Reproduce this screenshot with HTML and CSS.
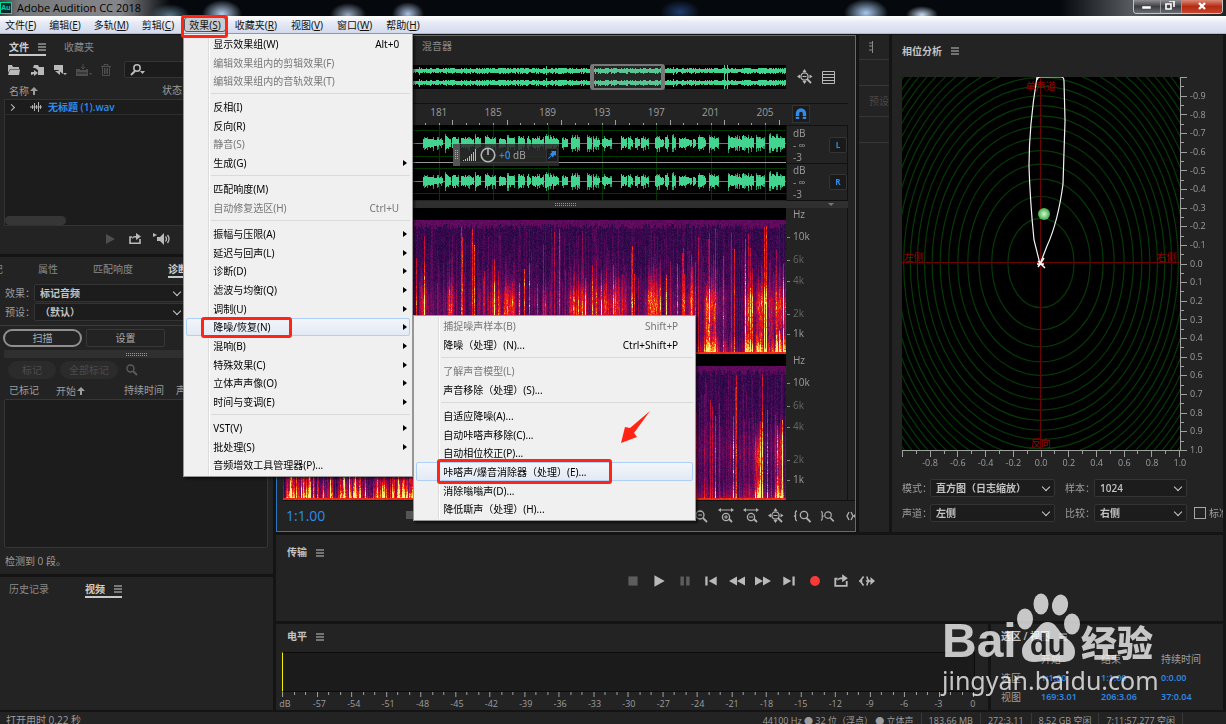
FILE: index.html
```html
<!DOCTYPE html>
<html lang="zh-CN">
<head>
<meta charset="utf-8">
<title>Adobe Audition CC 2018</title>
<link rel="stylesheet" href="styles.css">
</head>
<body>
<svg class="sprite" aria-hidden="true">
  <symbol id="i-lines" viewBox="0 0 8 8"><path d="M0 1.5h8M0 4.5h8M0 7.5h8" stroke="currentColor"/></symbol>
  <symbol id="i-up" viewBox="0 0 8 8"><path d="M4 0l4 4H5v4H3V4H0z" fill="currentColor"/></symbol>
  <symbol id="i-folder" viewBox="0 0 14 12"><path d="M1 1h4l1 2h6v2H3L1 9z" fill="currentColor"/><path d="M3 5.5h10L12 11H1z" fill="currentColor"/></symbol>
  <symbol id="i-import" viewBox="0 0 14 12"><path d="M4 1h4l1 2h5v8H8V6L5 4H3z" fill="currentColor"/><path d="M1 11V8h3V6l4 3-4 3v-2z" fill="currentColor"/></symbol>
  <symbol id="i-new" viewBox="0 0 14 12"><path d="M1 1h9v9L5 6H1z" fill="currentColor"/><path d="M2 7l5 4V7zM10 9h4l-2 2z" fill="currentColor"/></symbol>
  <symbol id="i-insert" viewBox="0 0 16 12"><path d="M0 5h4v1h6V5h2v7H0z" fill="currentColor"/><path d="M7 0v5M5 3l2 2 2-2" stroke="currentColor" fill="none"/><path d="M1 9h10" stroke="#232323"/><path d="M13 9h3l-1 2z" fill="currentColor"/></symbol>
  <symbol id="i-trash" viewBox="0 0 10 12"><path d="M0 2.5h10M3 2V.5h4V2M1.500 3v8.500h7V3M3.500 4v6M5 4v6M6.500 4v6" stroke="currentColor" fill="none"/></symbol>
  <symbol id="i-find" viewBox="0 0 16 12"><circle cx="7" cy="4" r="3.200" fill="none" stroke="currentColor" stroke-width="1.500"/><path d="M5 7L1 11" stroke="currentColor" stroke-width="2"/><path d="M10 7h5l-2.500 3z" fill="currentColor"/></symbol>
  <symbol id="i-search" viewBox="0 0 12 12"><circle cx="4.500" cy="4.500" r="3.500" fill="none" stroke="currentColor" stroke-width="1.400"/><path d="M7 7l4 4" stroke="currentColor" stroke-width="2"/></symbol>
  <symbol id="i-wave" viewBox="0 0 12 10"><path d="M0 5h12M2.500 3v4M4.500 1v8M6.500 3v4M8.500 0v10M10.500 3v4" stroke="currentColor"/></symbol>
  <symbol id="i-play" viewBox="0 0 14 12"><path d="M3 1l9 5-9 5z" fill="currentColor"/></symbol>
  <symbol id="i-stop" viewBox="0 0 14 12"><path d="M3 2h8v8H3z" fill="currentColor"/></symbol>
  <symbol id="i-pause" viewBox="0 0 14 12"><path d="M3 2h3v8H3zM8 2h3v8H8z" fill="currentColor"/></symbol>
  <symbol id="i-prev" viewBox="0 0 14 12"><path d="M2 2h2v8H2zM12 2v8L5 6z" fill="currentColor"/></symbol>
  <symbol id="i-next" viewBox="0 0 14 12"><path d="M12 2h-2v8h2zM2 2v8l7-4z" fill="currentColor"/></symbol>
  <symbol id="i-rew" viewBox="0 0 14 12"><path d="M7 2v8L0 6zM14 2v8L7 6z" fill="currentColor"/></symbol>
  <symbol id="i-fwd" viewBox="0 0 14 12"><path d="M0 2v8l7-4zM7 2v8l7-4z" fill="currentColor"/></symbol>
  <symbol id="i-rec" viewBox="0 0 14 12"><circle cx="7" cy="6" r="4.300" fill="#fa3a3a"/></symbol>
  <symbol id="i-loop" viewBox="0 0 14 12"><path d="M4 4H2v6.200h10V6" fill="none" stroke="currentColor" stroke-width="1.600"/><path d="M4 6c0-3 2-3 4-3V0l5 3.500L8 7V4.500c-2 0-3 0-4 1.500z" fill="currentColor"/></symbol>
  <symbol id="i-skip" viewBox="0 0 14 12"><path d="M4 2L1 6l3 4M7 2c0 3 1 3 2 4-1 1-2 1-2 4M0 6h3M6 6h7" fill="none" stroke="currentColor" stroke-width="1.400"/><path d="M10 2.500L14 6l-4 3.500z" fill="currentColor"/></symbol>
  <symbol id="i-speaker" viewBox="0 0 18 14"><path d="M0 1l4 2-4 2zM4 5h3l4-4v12L7 9H4z" fill="currentColor"/><path d="M12.500 4.500q2 2.500 0 5M14.500 3q3 4 0 8" fill="none" stroke="currentColor" stroke-width="1.300"/></symbol>
  <symbol id="i-zout" viewBox="0 0 14 14"><circle cx="6" cy="6" r="4" fill="none" stroke="currentColor" stroke-width="1.300"/><path d="M4 6h4" stroke="currentColor"/><path d="M9 9l4 4" stroke="currentColor" stroke-width="1.800"/></symbol>
  <symbol id="i-hzin" viewBox="0 0 16 16"><path d="M2 2h12" stroke="currentColor"/><path d="M0 2l3-2v4zM16 2l-3-2v4z" fill="currentColor"/><circle cx="8" cy="9" r="3.600" fill="none" stroke="currentColor" stroke-width="1.300"/><path d="M6 9h4M8 7v4" stroke="currentColor"/><path d="M11 11l3 3" stroke="currentColor" stroke-width="1.800"/></symbol>
  <symbol id="i-hzout" viewBox="0 0 16 16"><path d="M2 2h12" stroke="currentColor"/><path d="M0 2l3-2v4zM16 2l-3-2v4z" fill="currentColor"/><circle cx="8" cy="9" r="3.600" fill="none" stroke="currentColor" stroke-width="1.300"/><path d="M6 9h4" stroke="currentColor"/><path d="M11 11l3 3" stroke="currentColor" stroke-width="1.800"/></symbol>
  <symbol id="i-zfull" viewBox="0 0 16 16"><circle cx="7.500" cy="7.500" r="3.600" fill="none" stroke="currentColor" stroke-width="1.300"/><path d="M5.500 7.500h4" stroke="currentColor"/><path d="M10 10l4 4" stroke="currentColor" stroke-width="1.800"/><path d="M5.500 3l2-3 2 3zM5.500 12l2 3 2-3zM3 5.500l-3 2 3 2zM12.500 5.500l3 2-3 2z" fill="currentColor"/></symbol>
  <symbol id="i-zl" viewBox="0 0 18 14"><path d="M4 2Q2 2 2.500 5T1 7q2 0 1.500 2T4 12" fill="none" stroke="currentColor" stroke-width="1.300"/><circle cx="11" cy="6" r="3.700" fill="none" stroke="currentColor" stroke-width="1.300"/><path d="M13.500 9l4 4" stroke="currentColor" stroke-width="1.800"/></symbol>
  <symbol id="i-zr" viewBox="0 0 18 14"><path d="M1 2q2 0 1.500 3T4 7q-2 0-1.500 2T1 12" fill="none" stroke="currentColor" stroke-width="1.300"/><circle cx="9" cy="6" r="3.700" fill="none" stroke="currentColor" stroke-width="1.300"/><path d="M11.500 9l4 4" stroke="currentColor" stroke-width="1.800"/></symbol>
  <symbol id="i-list" viewBox="0 0 13 13"><path d="M.5.5h12v12H.5zM0 3.500h13M0 6.500h13M0 9.500h13" fill="none" stroke="currentColor"/></symbol>
  <symbol id="i-magnet" viewBox="0 0 12 12"><path d="M2.500 11V5.500a3.500 3.500 0 017 0V11" fill="none" stroke="#2d8ceb" stroke-width="3.400"/><path d="M0 8.500h5M7 8.500h5" stroke="#1b1b1b" stroke-width=".8"/></symbol>
  <symbol id="i-pin" viewBox="0 0 10 10"><path d="M4 0h6v6L8 5 6 8 4.500 6 1 10 0 9l4-4-2-1 3-2z" fill="#2d8ceb"/></symbol>
  <symbol id="i-knob" viewBox="0 0 16 16"><circle cx="8" cy="8" r="6.800" fill="none" stroke="#b5b5b5" stroke-width="1.600"/><path d="M8 1v7" stroke="#b5b5b5" stroke-width="1.600"/></symbol>
  <symbol id="i-bars" viewBox="0 0 14 12"><path d="M.5 12v-1M2.500 12v-2M4.500 12V9M6.500 12V7M8.500 12V5M10.500 12V3M12.500 12V0" stroke="#bbb"/></symbol>
</svg>

<div class="app">
  <header class="titlebar">
    <span class="logo">Au</span>
    <h1 class="app-title">Adobe Audition CC 2018</h1>
    <div class="win-controls">
      <button class="win-btn" aria-label="最小化"><svg width="26" height="12"><path d="M8 5h9v3H8z" fill="#fff" stroke="#444" stroke-width=".5"/></svg></button>
      <button class="win-btn" aria-label="还原"><svg width="20" height="12"><path d="M8 0h5v6M5 3h5v5H5z" fill="none" stroke="#fff" stroke-width="1.600"/></svg></button>
      <button class="win-btn win-close" aria-label="关闭"><svg width="40" height="12"><path d="M17 2l6 6M23 2l-6 6" stroke="#fff" stroke-width="2.400"/></svg></button>
    </div>
  </header>

  <nav class="menubar">
    <button class="menu-btn">文件(<u>F</u>)</button>
    <button class="menu-btn">编辑(<u>E</u>)</button>
    <button class="menu-btn">多轨(<u>M</u>)</button>
    <button class="menu-btn">剪辑(<u>C</u>)</button>
    <div class="menu-holder">
      <button class="menu-btn is-open">效果(<u>S</u>)</button>
      <div class="menu menu-main">
        <div class="group">
          <button class="item">显示效果组(W)<kbd>Alt+0</kbd></button>
          <button class="item" disabled>编辑效果组内的剪辑效果(F)</button>
          <button class="item" disabled>编辑效果组内的音轨效果(T)</button>
        </div>
        <div class="group">
          <button class="item">反相(I)</button>
          <button class="item">反向(R)</button>
          <button class="item" disabled>静音(S)</button>
          <button class="item has-sub">生成(G)</button>
        </div>
        <div class="group">
          <button class="item">匹配响度(M)</button>
          <button class="item" disabled>自动修复选区(H)<kbd>Ctrl+U</kbd></button>
        </div>
        <div class="group">
          <button class="item has-sub">振幅与压限(A)</button>
          <button class="item has-sub">延迟与回声(L)</button>
          <button class="item has-sub">诊断(D)</button>
          <button class="item has-sub">滤波与均衡(Q)</button>
          <button class="item has-sub">调制(U)</button>
          <button class="item has-sub is-hot mark-restore">降噪/恢复(N)</button>
          <button class="item has-sub">混响(B)</button>
          <button class="item has-sub">特殊效果(C)</button>
          <button class="item has-sub">立体声声像(O)</button>
          <button class="item has-sub">时间与变调(E)</button>
        </div>
        <div class="group">
          <button class="item has-sub">VST(V)</button>
          <button class="item has-sub">批处理(S)</button>
          <button class="item">音频增效工具管理器(P)...</button>
        </div>
        <div class="menu menu-sub">
          <div class="group">
            <button class="item" disabled>捕捉噪声样本(B)<kbd>Shift+P</kbd></button>
            <button class="item">降噪（处理）(N)...<kbd>Ctrl+Shift+P</kbd></button>
          </div>
          <div class="group">
            <button class="item" disabled>了解声音模型(L)</button>
            <button class="item">声音移除（处理）(S)...</button>
          </div>
          <div class="group">
            <button class="item">自适应降噪(A)...</button>
            <button class="item">自动咔嗒声移除(C)...</button>
            <button class="item">自动相位校正(P)...</button>
            <button class="item is-hot mark-click">咔嗒声/爆音消除器（处理）(E)...</button>
            <button class="item">消除嗡嗡声(D)...</button>
            <button class="item">降低嘶声（处理）(H)...</button>
          </div>
          <svg class="arrow" viewBox="0 0 30 33"><path d="M29 0L9 17 4 16 0 32 16 26 13 22z" fill="#ff2414"/></svg>
        </div>
      </div>
    </div>
    <button class="menu-btn">收藏夹(<u>R</u>)</button>
    <button class="menu-btn">视图(<u>V</u>)</button>
    <button class="menu-btn">窗口(<u>W</u>)</button>
    <button class="menu-btn">帮助(<u>H</u>)</button>
  </nav>

  <main class="workspace">
    <div class="left">
      <section class="panel files">
        <div class="tabs">
          <button class="tab is-active">文件<svg class="ham"><use href="#i-lines"/></svg></button>
          <button class="tab">收藏夹</button>
        </div>
        <div class="filebar">
          <button class="ico" aria-label="打开"><svg width="14" height="12"><use href="#i-folder"/></svg></button>
          <button class="ico" aria-label="导入"><svg width="14" height="12"><use href="#i-import"/></svg></button>
          <button class="ico" aria-label="新建"><svg width="14" height="12"><use href="#i-new"/></svg></button>
          <button class="ico dim" aria-label="插入"><svg width="16" height="12"><use href="#i-insert"/></svg></button>
          <button class="ico dim" aria-label="删除"><svg width="10" height="12"><use href="#i-trash"/></svg></button>
          <label class="search"><svg width="16" height="12"><use href="#i-find"/></svg><input type="text" aria-label="搜索文件"></label>
        </div>
        <div class="file-head"><span class="sort">名称<svg width="8" height="8"><use href="#i-up"/></svg></span><span>状态</span></div>
        <div class="file-list">
          <div class="file-row"><i class="chev"></i><svg width="12" height="10"><use href="#i-wave"/></svg><b>无标题 (1).wav</b></div>
          <div class="scroll-pill"></div>
        </div>
        <div class="preview">
          <button class="ico dim" aria-label="播放"><svg width="14" height="12"><use href="#i-play"/></svg></button>
          <button class="ico" aria-label="循环"><svg width="14" height="12"><use href="#i-loop"/></svg></button>
          <button class="ico" aria-label="自动播放"><svg width="18" height="14"><use href="#i-speaker"/></svg></button>
        </div>
      </section>

      <section class="panel diag">
        <div class="tabs diag-tabs">
          <button class="tab">记</button>
          <button class="tab">属性</button>
          <button class="tab">匹配响度</button>
          <button class="tab is-active">诊断</button>
        </div>
        <div class="field"><label for="fx">效果：</label><span class="select"><select id="fx"><option>标记音频</option></select></span></div>
        <div class="field"><label for="preset">预设：</label><span class="select"><select id="preset"><option>（默认）</option></select></span></div>
        <div class="scan">
          <button class="btn btn-round">扫描</button>
          <button class="btn">设置</button>
        </div>
        <div class="marks">
          <div class="grip"><i class="grip-dots"></i></div>
          <div class="mark-tools">
            <button class="pill" disabled>标记</button>
            <button class="pill" disabled>全部标记</button>
            <svg width="12" height="12"><use href="#i-search"/></svg>
          </div>
          <div class="mark-head"><span>已标记</span><span class="sort">开始<svg width="8" height="8"><use href="#i-up"/></svg></span><span>持续时间</span><span>声道</span></div>
          <div class="mark-list"></div>
        </div>
        <p class="found">检测到 0 段。</p>
      </section>

      <section class="panel history">
        <div class="tabs">
          <button class="tab">历史记录</button>
          <button class="tab is-active">视频<svg class="ham"><use href="#i-lines"/></svg></button>
        </div>
      </section>
    </div>

    <section class="panel editor">
      <div class="tabs editor-tabs"><button class="tab">混音器</button></div>
      <div class="ed-row overview">
        <div class="track"><canvas id="overview" width="503" height="24"></canvas><div class="range"></div></div>
        <div class="side side-icons"><svg width="16" height="16"><use href="#i-zfull"/></svg><svg width="13" height="13"><use href="#i-list"/></svg></div>
      </div>
      <div class="ed-row ruler">
        <div class="track">
          <div class="scale"><span>173</span><span>177</span><span>181</span><span>185</span><span>189</span><span>193</span><span>197</span><span>201</span><span>205</span></div>
          <canvas id="ticks" width="503" height="7"></canvas>
        </div>
        <div class="side"><button class="magnet" aria-label="吸附"><svg width="12" height="12"><use href="#i-magnet"/></svg></button></div>
      </div>
      <div class="ed-row">
        <div class="track">
          <canvas id="wave" width="503" height="75"></canvas>
          <div class="hud"><i class="hud-grip"></i><svg width="14" height="12"><use href="#i-bars"/></svg><svg width="16" height="16"><use href="#i-knob"/></svg><span><b>+0</b> dB</span><button class="pin" aria-label="固定"><svg width="8" height="8"><use href="#i-pin"/></svg></button></div>
        </div>
        <div class="side channels">
          <div class="chan"><div class="db"><span>dB</span><span>- ∞</span><span>-3</span></div><button class="lr">L</button></div>
          <div class="chan"><div class="db"><span>dB</span><span>- ∞</span><span>-3</span></div><button class="lr">R</button></div>
        </div>
      </div>
      <div class="splitter"><i class="grip-dots"></i><i class="caret"></i></div>
      <div class="ed-row">
        <canvas class="track" id="spec1" width="503" height="146"></canvas>
        <div class="side hz"><span>Hz</span><span>10k</span><span class="lo">6k</span><span class="lo">4k</span><span class="lo">2k</span><span>1k</span></div>
      </div>
      <div class="ed-row">
        <canvas class="track" id="spec2" width="503" height="146"></canvas>
        <div class="side hz"><span>Hz</span><span>10k</span><span class="lo">6k</span><span class="lo">4k</span><span class="lo">2k</span><span>1k</span></div>
      </div>
      <div class="ed-foot">
        <span class="time">1:1.00</span>
        <i class="foot-stop"></i>
        <div class="zooms">
          <svg width="16" height="14"><use href="#i-zout"/></svg><svg width="16" height="16"><use href="#i-hzin"/></svg><svg width="16" height="16"><use href="#i-hzout"/></svg><svg width="16" height="16"><use href="#i-zfull"/></svg><svg width="18" height="14"><use href="#i-zl"/></svg><svg width="16" height="14"><use href="#i-zr"/></svg><svg width="10" height="14"><path d="M4 3L2 7l2 4M6 3l2 4-2 4M12 4L9 7l3 3" stroke="currentColor" fill="none" stroke-width="1.300"/></svg>
        </div>
      </div>
    </section>

    <section class="panel strip">
      <div class="strip-top"><svg width="6" height="12"><path d="M1 2h3M1 5h3M1 9h3M4.500 0v12" stroke="#888"/></svg></div>
      <div class="strip-row"></div>
      <div class="strip-row strip-preset">预设</div>
      <div class="strip-row"></div>
    </section>

    <section class="panel phase">
      <div class="tabs"><button class="tab is-title">相位分析<svg class="ham"><use href="#i-lines"/></svg></button></div>
      <div class="plot-grid">
        <div class="plot">
          <svg id="rings" viewBox="0 0 278 373" preserveAspectRatio="none">
            <path d="M138.500 0v373" stroke="#6b0303" stroke-width="1"/><path d="M0 185.500h278" stroke="#6b0303" stroke-width="1"/>
            <path d="M135 3Q136 0 138 0h21q3 0 3 4l1 40-2 63q-5 38-16 62l-7 18-6-24q-4-40-5-74 0-40 8-89z" fill="none" stroke="#f4f4f4" stroke-width="1.200"/>
            <path d="M136 184l7 7M142 181l-6 9M135 187h7" stroke="#fff" stroke-width="1.500"/>
            <defs><radialGradient id="ball"><stop offset="0" stop-color="#d9f5d6"/><stop offset="1" stop-color="#3cb043"/></radialGradient></defs>
            <circle cx="142" cy="137" r="6" fill="url(#ball)"/>
          </svg>
          <span class="pl pl-top">单声道</span><span class="pl pl-left">左侧</span><span class="pl pl-right">右侧</span><span class="pl pl-bottom">反向</span>
        </div>
        <div class="axis-y"><canvas id="axisY" width="8" height="374"></canvas><div class="vscale"><span>-0.9</span><span>-0.8</span><span>-0.7</span><span>-0.6</span><span>-0.5</span><span>-0.4</span><span>-0.3</span><span>-0.2</span><span>-0.1</span><span>0.0</span><span>0.1</span><span>0.2</span><span>0.3</span><span>0.4</span><span>0.5</span><span>0.6</span><span>0.7</span><span>0.8</span><span>0.9</span><span>1.0</span></div></div>
        <div class="axis-x"><canvas id="axisX" width="278" height="7"></canvas><div class="scale"><span>-0.8</span><span>-0.6</span><span>-0.4</span><span>-0.2</span><span>0.0</span><span>0.2</span><span>0.4</span><span>0.6</span><span>0.8</span><span>1.0</span></div></div>
      </div>
      <div class="phase-form">
        <label for="mode">模式：</label><span class="select"><select id="mode"><option>直方图（日志缩放）</option></select></span>
        <label for="samples">样本：</label><span class="select"><select id="samples"><option>1024</option></select></span><span></span>
        <label for="chan">声道：</label><span class="select"><select id="chan"><option>左侧</option></select></span>
        <label for="cmp">比较：</label><span class="select"><select id="cmp"><option>右侧</option></select></span>
        <label class="norm"><input type="checkbox">标准化</label>
      </div>
    </section>

    <section class="panel transport">
      <h2 class="ptitle">传输<svg class="ham"><use href="#i-lines"/></svg></h2>
      <div class="controls">
        <button class="ico off" aria-label="停止"><svg width="16" height="14"><use href="#i-stop"/></svg></button>
        <button class="ico" aria-label="播放"><svg width="16" height="14"><use href="#i-play"/></svg></button>
        <button class="ico off" aria-label="暂停"><svg width="16" height="14"><use href="#i-pause"/></svg></button>
        <button class="ico" aria-label="移到上一个"><svg width="16" height="14"><use href="#i-prev"/></svg></button>
        <button class="ico" aria-label="快退"><svg width="16" height="14"><use href="#i-rew"/></svg></button>
        <button class="ico" aria-label="快进"><svg width="16" height="14"><use href="#i-fwd"/></svg></button>
        <button class="ico" aria-label="移到下一个"><svg width="16" height="14"><use href="#i-next"/></svg></button>
        <button class="ico" aria-label="录制"><svg width="16" height="14"><use href="#i-rec"/></svg></button>
        <button class="ico" aria-label="循环播放"><svg width="16" height="14"><use href="#i-loop"/></svg></button>
        <button class="ico" aria-label="跳过所选项目"><svg width="16" height="14"><use href="#i-skip"/></svg></button>
      </div>
    </section>

    <section class="panel levels">
      <h2 class="ptitle">电平<svg class="ham"><use href="#i-lines"/></svg></h2>
      <div class="meter"><div class="bar"></div><div class="bar"></div></div>
      <canvas id="dbTicks" width="692" height="5"></canvas>
      <div class="scale db-scale"><span>dB</span><span>-57</span><span>-54</span><span>-51</span><span>-48</span><span>-45</span><span>-42</span><span>-39</span><span>-36</span><span>-33</span><span>-30</span><span>-27</span><span>-24</span><span>-21</span><span>-18</span><span>-15</span><span>-12</span><span>-9</span><span>-6</span><span>-3</span><span>0</span></div>
    </section>

    <section class="panel selview">
      <h2 class="ptitle">选区 / 视图<svg class="ham"><use href="#i-lines"/></svg></h2>
      <table class="seltable">
        <tr><th></th><th>开始</th><th>结束</th><th>持续时间</th></tr>
        <tr><th>选区</th><td>1:1.00</td><td>1:1.00</td><td>0:0.00</td></tr>
        <tr><th>视图</th><td>169:3.01</td><td>206:3.06</td><td>37:0.04</td></tr>
      </table>
    </section>
  </main>

  <footer class="status">
    <span class="opened">打开用时 0.22 秒</span>
    <span class="cell">44100 Hz ● 32 位（浮点） ● 立体声</span><span class="cell">183.66 MB</span><span class="cell">272:3.11</span><span class="cell">8.52 GB 空闲</span><span class="cell">7:11:57.277 空闲</span>
  </footer>

  <div class="watermark" aria-hidden="true">
    <div class="wm-top">
      <span class="wm-bai">Bai</span>
      <span class="wm-paw"><svg viewBox="0 0 64 70"><g fill="#fff"><ellipse cx="8" cy="26" rx="8" ry="10.500"/><ellipse cx="24" cy="11" rx="7.500" ry="10.500"/><ellipse cx="43" cy="12" rx="8" ry="10.500" transform="rotate(12 43 12)"/><ellipse cx="55" cy="31" rx="8" ry="10.500"/><path d="M31 29c8 0 10 9 16 14 8 6 11 10 11 16 0 8-6 10-13 10-6 0-10-1-15-1s-8 1-13 1C9 69 5 65 5 58c0-7 5-10 10-16 5-5 8-13 16-13z"/></g></svg><em>du</em></span>
      <span class="wm-cn">经验</span>
    </div>
    <div class="wm-url">jingyan.baidu.com</div>
  </div>
</div>
<script src="draw.js"></script>
</body>
</html>
```
FILE: styles.css
```css
* { box-sizing: border-box; }
body {
  margin: 0;
  background: #141414;
  color: #9d9d9d;
  font: 10px/14px "Open Sans", "Noto Sans CJK SC", sans-serif;
}
button, input, select { font: inherit; color: inherit; }
button { margin: 0; padding: 0; border: 0; background: none; white-space: nowrap; }
label { white-space: nowrap; }
svg, canvas { display: block; flex: none; }
h1, h2, p { margin: 0; font-size: inherit; }
.sprite { position: absolute; width: 0; height: 0; }
.app { display: flex; flex-direction: column; height: 100vh; overflow: hidden; position: relative; }

/* title bar */
.titlebar {
  display: flex; align-items: center; height: 16px; flex: none;
  background:
    radial-gradient(ellipse 20px 14px at 222px 14px, #b5cdec, transparent),
    radial-gradient(ellipse 20px 12px at 170px 16px, #5a7c8c, transparent),
    radial-gradient(ellipse 18px 12px at 348px 15px, #98a9c0, transparent),
    radial-gradient(ellipse 16px 12px at 408px 14px, #abc2e4, transparent),
    radial-gradient(ellipse 20px 12px at 680px 12px, #1e3c6c, transparent),
    radial-gradient(ellipse 22px 14px at 866px 13px, #a9c9ee, transparent),
    radial-gradient(ellipse 16px 9px at 922px 15px, #c5daf2, transparent),
    linear-gradient(90deg, #3c4247, #76797b 20px, #85868a 120px, #05080c 170px, #05080c 1060px, #555a5e 1130px, #222 100%);
  color: #000;
}
.logo { width: 12px; height: 12px; margin-right: 5px; background: #002b26; border: 1px solid #0d9; color: #1dcaae; font: bold 7px/10px "Open Sans", sans-serif; text-align: center; }
.app-title { font: 11px/14px "Open Sans", sans-serif; }
.win-controls { display: flex; align-self: flex-start; margin: 0 3px 0 auto; border: 1px solid #c5c5c5; border-top: 0; border-radius: 0 0 4px 4px; overflow: hidden; }
.win-btn { height: 13px; background: linear-gradient(#8d8f93, #3b3d42 50%, #6b6d75); border-right: 1px solid #999; }
.win-close { background: linear-gradient(#d98a78, #b52a12 50%, #c8452c); border: 0; }

/* menu bar */
.menubar { display: flex; align-items: center; height: 18px; flex: none; background: linear-gradient(#fff, #e6eaf5 40%, #d3daed); border-bottom: 1px solid #b4b8c6; color: #111; position: relative; z-index: 5; font-family: "Noto Sans", "Noto Sans CJK SC", sans-serif; }
.menu-btn { height: 16px; padding: 0 7px 0 6px; }
.menu-btn:first-child { padding-left: 5px; }
.menu-holder { position: relative; margin-left: 2px; }
.menu-holder ~ .menu-btn { padding: 0 7px; }
.menu-btn.is-open { background: #c9cbd2; border: 1px solid #555; border-radius: 3px; padding: 0 4px; height: 15px; margin: 0 2px 0 1px; }
.menu-holder::after, .mark-restore::before, .mark-click::before { content: ""; position: absolute; border: 3px solid #ff2414; border-radius: 3px; pointer-events: none; z-index: 3; }
.menu-holder::after { inset: -2px 0 -6px -2px; }
.menu { position: absolute; background: #f0f0f0; border: 1px solid #979797; box-shadow: 2px 2px 2px rgba(0, 0, 0, .55); color: #000; padding: 0 2px 2px; }
.menu::before { content: ""; position: absolute; top: 1px; bottom: 1px; left: 24px; width: 2px; background: linear-gradient(90deg, #dcdcdc 50%, #fff 50%); }
.menu-main { top: 16px; left: 0; width: 230px; }
.menu-sub { top: 281px; left: 229px; width: 283px; }
.group + .group { border-top: 1px solid #dadada; margin: 3px 0 0 25px; padding-top: 3px; }
.item { position: relative; display: flex; align-items: center; width: 100%; height: 19px; padding: 0 10px 0 26px; border: 1px solid transparent; border-radius: 2px; text-align: left; }
.group + .group .item { margin-left: -25px; width: calc(100% + 25px); }
.item:nth-child(3n) { height: 18px; }
.item:disabled { color: #777; }
.item kbd { margin-left: auto; font: inherit; }
.menu-sub .item { padding-right: 14px; }
.item.has-sub::after { content: ""; margin: 0 -8px 0 auto; border: 3px solid transparent; border-left: 4px solid #000; border-right: 0; }
.item.is-hot { background: linear-gradient(#f3f5f9, #e3eaf5); border-color: #aecff7; }
.mark-restore::before { inset: -2px 117px -3px 14px; }
.mark-click::before { inset: -4px 80px -4px 20px; }
.arrow { position: absolute; width: 30px; height: 33px; left: 207px; top: 95px; }

/* workspace */
.workspace { flex: 1; min-height: 0; display: grid; grid-template-columns: 273px minmax(0, 1fr) 30px 96px 232px; grid-template-rows: minmax(0, 1fr) 86px 86px; gap: 3px; padding: 1px 3px 2px 0; }
.panel { background: #232323; overflow: hidden; }
.left { grid-row: 1 / 4; display: grid; grid-template-rows: 219px minmax(0, 1fr) 133px; gap: 3px; }
.tabs { display: flex; align-items: flex-start; gap: 18px; padding: 4px 9px 0; height: 26px; }
.tab { display: flex; align-items: center; gap: 9px; height: 17px; border-bottom: 2px solid transparent; color: #8a8a8a; }
.tab.is-active { color: #cfcfcf; border-color: #c8c8c8; font-weight: 600; }
.tab.is-title { color: #c4c4c4; font-weight: 600; }
.ham { width: 8px; height: 9px; }
.ico { color: #b9b9b9; }
.ico.dim { color: #4e4e4e; }
.ico.off { color: #5d5d5d; }
.sort { display: flex; align-items: center; gap: 1px; }

.filebar { display: flex; align-items: center; gap: 9px; padding-left: 7px; height: 17px; }
.search { display: flex; align-items: center; flex: 1; height: 17px; background: #1b1b1b; border: 1px solid #343434; border-radius: 2px; margin: 0 4px 0 4px; padding-left: 5px; color: #bbb; }
.search input { flex: 1; min-width: 0; border: 0; background: none; height: 14px; padding: 0; }
.file-head { display: flex; gap: 124px; padding: 5px 9px 0; height: 21px; }
.file-list { position: relative; margin: 0 4px; height: 127px; border: 1px solid #333; background: #1c1c1c; display: flex; flex-direction: column; }
.file-row { display: flex; align-items: center; gap: 6px; height: 15px; padding-left: 4px; border-bottom: 1px solid #2c2c2c; color: #b0b0b0; }
.file-row b { color: #2d8ceb; font-weight: 600; }
.file-row svg { margin-left: 10px; }
.chev { width: 5px; height: 5px; border: solid #bbb; border-width: 1px 1px 0 0; transform: rotate(45deg); }
.scroll-pill { margin-top: auto; width: 61px; height: 9px; border-radius: 5px; background: #363636; }
.preview { display: flex; align-items: center; gap: 11px; height: 26px; padding-left: 103px; }

.diag { display: flex; flex-direction: column; }
.diag-tabs { gap: 35px; padding: 4px 0 0; margin-left: -7px; flex: none; }
.field { display: grid; grid-template-columns: 29px 152px; align-items: center; padding-left: 5px; height: 19px; }
.select { position: relative; display: block; }
.select select { appearance: none; width: 100%; height: 18px; padding: 0 16px 0 5px; border: 1px solid #343434; border-radius: 2px; background: #1c1c1c; color: #c3c3c3; font-weight: 600; display: block; }
.select::after { content: ""; position: absolute; right: 6px; top: 5px; width: 5px; height: 5px; border: solid #ccc; border-width: 0 1px 1px 0; transform: rotate(45deg); }
.scan { display: flex; gap: 4px; padding: 3px 3px; margin-top: 4px; border-top: 1px solid #3a3a3a; }
.btn { width: 79px; height: 18px; border: 1px solid #383838; border-radius: 2px; color: #aaa; }
.btn-round { border: 2px solid #8f8f8f; border-radius: 9px; }
.marks { flex: 1; min-height: 0; margin: 0 5px 0 4px; display: flex; flex-direction: column; }
.grip, .splitter { background: #2f2f2f; height: 8px; display: flex; align-items: center; justify-content: center; flex: none; }
.grip-dots { width: 21px; height: 3px; background: repeating-linear-gradient(transparent 0 1px, #2f2f2f 1px 2px), repeating-linear-gradient(90deg, #999 0 1px, #2f2f2f 1px 2px); }
.mark-tools { display: flex; gap: 4px; align-items: center; padding: 3px 4px; height: 24px; flex: none; color: #5c5c5c; }
.mark-tools svg { margin-left: 4px; }
.pill { height: 18px; padding: 0 14px; border-radius: 9px; background: #2b2b2b; color: #4c4c4c; }
.pill + .pill { padding: 0 9px; }
.mark-head { display: flex; gap: 17px; padding: 1px 5px 0; height: 17px; flex: none; }
.mark-head span:nth-child(3) { margin-left: 22px; }
.mark-head span:nth-child(4) { margin-left: -5px; }
.mark-list { flex: 1; background: #1c1c1c; border: 1px solid #363636; border-radius: 2px; }
.found { padding: 6px 5px 6px; }
.history .tabs { gap: 36px; padding: 4px 9px 0; }

/* editor */
.editor { border: 1px solid #2b77c4; display: flex; flex-direction: column; padding: 0 7px 0 6px; }
.editor-tabs { padding: 2px 0 0 139px; height: 29px; }
.ed-row { display: flex; flex: none; }
.track { flex: 1; min-width: 0; position: relative; }
.track canvas { width: 100%; }
.side { width: 62px; flex: none; position: relative; }
.side-icons { display: flex; align-items: center; gap: 9px; padding-left: 11px; color: #b9b9b9; }
.overview { margin-bottom: 14px; }
.range { position: absolute; left: 61%; width: 15%; top: -1px; bottom: -1px; border: 2px solid #777; border-left-width: 4px; border-right-width: 4px; border-radius: 3px; background: rgba(150, 150, 150, .25); }
.ruler { border-top: 1px solid #111; height: 22px; }
.scale { display: flex; justify-content: space-between; }
.scale span { width: 0; display: flex; justify-content: center; white-space: nowrap; }
.ruler .scale { padding: 1px 21px 0 47px; }
.magnet { margin: 1px 0 0 6px; width: 18px; height: 18px; border: 1px solid #333; background: #1b1b1b; display: flex; align-items: center; justify-content: center; }
.hud { position: absolute; left: 170px; top: 19px; height: 22px; width: 106px; display: flex; align-items: center; gap: 3px; background: rgba(45, 45, 45, .85); color: #aaa; }
.hud b { color: #2d8ceb; font-weight: 600; }
.hud-grip { width: 7px; height: 22px; background: linear-gradient(90deg, #555 2px, transparent 2px 3px, #555 3px 4px, transparent 4px 5px, #555 5px), repeating-linear-gradient(#aaa 0 1px, #555 1px 2px) 0 6px / 100% 9px no-repeat, #555; }
.pin { margin-left: auto; margin-right: 1px; width: 12px; height: 14px; border: 1px solid #333; background: #1b1b1b; display: flex; align-items: center; justify-content: center; }
.channels { border: 1px solid #111; }
.chan { display: flex; align-items: center; height: 37px; padding: 0 0 0 6px; }
.chan + .chan { border-top: 1px solid #111; }
.db { flex: 1; line-height: 12px; }
.db span { display: block; }
.lr { width: 18px; height: 16px; border: 1px solid #343434; border-radius: 2px; background: #1a1a1a; color: #2d8ceb; font-weight: bold; font-size: 8px; }
.splitter { height: 7px; position: relative; }
.caret { position: absolute; right: 14px; border: 3px solid transparent; border-top-color: #777; border-bottom: 0; }
.hz { padding-left: 7px; border-right: 1px solid #111; display: flex; flex-direction: column; }
.hz span { position: relative; line-height: 13px; }
.hz span:nth-child(2) { margin-top: 9px; }
.hz span:nth-child(3) { margin-top: 10px; }
.hz span:nth-child(4) { margin-top: 8px; }
.hz span:nth-child(5) { margin-top: 20px; }
.hz span:nth-child(6) { margin-top: 7px; }
.hz span + span::before { content: ""; position: absolute; left: -6px; top: 7px; width: 3px; height: 1px; background: #888; }
.hz .lo { color: #666; }
.ed-foot { flex: 1; display: flex; align-items: center; border-top: 1px solid #111; margin-right: -7px; }
.time { font-size: 14px; color: #2d8ceb; padding-left: 3px; }
.foot-stop { width: 8px; height: 8px; background: #555; margin-left: 81px; margin-bottom: 2px; }
.zooms { margin-left: auto; display: flex; align-items: center; gap: 9px; color: #b0b0b0; }

.strip-top { height: 25px; padding: 6px 0 0 9px; border-bottom: 1px solid #363636; }
.strip-row { height: 26px; border-bottom: 1px solid #363636; }
.strip-preset { height: 31px; padding: 8px 0 0 10px; color: #484848; white-space: nowrap; overflow: hidden; }

/* phase analysis */
.phase { grid-column: 4 / 6; padding-left: 10px; display: flex; flex-direction: column; }
.phase .tabs { padding: 8px 0 0; height: 42px; flex: none; }
.plot-grid { display: grid; grid-template-columns: 278px 1fr; grid-template-rows: 373px 29px; font-size: 9px; line-height: 12px; }
.plot { position: relative; background: #000; }
.plot svg { width: 100%; height: 100%; overflow: hidden; }
.pl { position: absolute; color: #a30000; font-size: 10px; }
.pl-top { top: 3px; left: 0; right: 0; text-align: center; }
.pl-bottom { bottom: 1px; left: 0; right: 0; text-align: center; }
.pl-left { left: 2px; top: 174px; }
.pl-right { right: 3px; top: 174px; }
.axis-y { display: flex; gap: 2px; align-items: flex-start; }
.vscale { display: flex; flex-direction: column; justify-content: space-between; height: 373px; padding-top: 19px; }
.vscale span { height: 0; display: flex; align-items: center; }
.axis-x .scale { padding: 0 0 0 28px; }
.phase-form { display: grid; grid-template-columns: 28px 125px 39px 93px 1fr; row-gap: 7px; align-items: center; }
.phase-form label:nth-of-type(even) { padding-left: 10px; }
.phase-form .norm { display: flex; align-items: center; gap: 3px; padding-left: 7px; }
.norm input { appearance: none; flex: none; width: 12px; height: 12px; margin: 0; border: 1px solid #a5a5a5; }

/* bottom panels */
.transport { grid-column: 2 / 6; padding: 10px 11px; }
.ptitle { display: flex; align-items: center; gap: 9px; color: #c4c4c4; font-weight: 600; line-height: 14px; }
.controls { display: flex; justify-content: center; gap: 10px; margin-top: 15px; }
.levels { grid-column: 2 / 5; padding: 5px 0 0 6px; margin-right: 0; }
.levels .ptitle, .selview .ptitle { padding-left: 5px; }
.levels .ptitle { margin-bottom: 9px; }
.meter { width: 100%; padding-right: 13px; height: 40px; display: grid; grid-template-rows: 1fr 1fr; background: #232323; }
.bar { background: #1b1b1b; border: 1px solid #0b0b0b; border-left: 1px solid #f5f000; }
.bar:first-child { border-bottom: 0; }
.bar + .bar { border-top: 0; }
.levels canvas { width: calc(100% - 13px); }
.db-scale { padding: 0 15px 0 3px; font-size: 9px; line-height: 13px; }
.selview { padding: 5px 0 0 5px; }
.seltable { border-collapse: collapse; margin: 6px 0 0 5px; table-layout: fixed; width: 220px; }
.seltable th, .seltable td { padding: 0; height: 19px; text-align: left; font-weight: normal; width: 60px; white-space: nowrap; }
.seltable th:first-child { width: 40px; }
.seltable td { color: #2d8ceb; font-weight: 600; font-size: 9px; }

.status { display: flex; flex: none; height: 12px; padding: 1px 43px 0 6px; background: #232323; line-height: 15px; overflow: hidden; white-space: nowrap; }
.opened { margin-right: auto; }
.cell { padding: 0 7px; border-right: 1px solid #393939; height: 15px; font-size: 9px; }

/* watermark */
.watermark { position: absolute; left: 942px; top: 593px; color: #fff; opacity: .75; z-index: 4; pointer-events: none; }
.wm-top { display: flex; align-items: flex-end; height: 70px; }
.wm-bai { font: bold 48px/45px "Liberation Sans", sans-serif; width: 75px; }
.wm-paw { position: relative; width: 64px; height: 70px; }
.wm-paw em { position: absolute; left: 13px; bottom: 3px; font: bold 29px/29px "Liberation Sans", sans-serif; color: #232323; }
.wm-cn { font: 900 36px/44px "Noto Sans CJK SC", sans-serif; }
.wm-url { font: 25px/34px "Noto Sans", sans-serif; }
```
FILE: draw.js
```js
// Small seeded generator so that every load draws the same audio.
function makeRandom(seed) {
  return function () {
    seed = (seed * 1664525 + 1013904223) >>> 0;
    return seed / 4294967296;
  };
}
const ctxOf = id => document.getElementById(id).getContext('2d');
const GREEN = '#43d590';

function drawOverview() {
  const c = ctxOf('overview'), r = makeRandom(4);
  c.fillStyle = '#000';
  c.fillRect(0, 0, 503, 24);
  c.fillStyle = GREEN;
  for (let x = 0; x < 503; x++) {
    const h = 3 + Math.round(r() * 3);
    const peak = (x === 441 || x === 444) ? 5 : (x % 127 === 9 ? 2 : 0);
    for (const y of [6, 18]) c.fillRect(x, y - Math.round(h / 2) - peak, 1, h + peak * 2);
  }
}

const bursts = [[38,97],[104,122],[127,147],[152,190],[195,212],[226,258],[266,285],[290,312],[324,343],[350,360],[366,400],[404,432],[436,446],[456,474],[482,508],[530,545],[550,570],[575,604],[633,650],[655,668],[675,688],[694,718],[736,762],[766,778],[786,797],[806,844],[850,858],[864,888],[896,924],[953,994],[996,1032],[1038,1064],[1076,1124]]
  .map(([a, b]) => [a / 3 + 127, b / 3 + 127]);

function drawWave() {
  const c = ctxOf('wave');
  c.fillStyle = '#000';
  c.fillRect(0, 0, 503, 75);
  c.fillStyle = '#003a00';
  for (let n = 0; n < 9; n++) c.fillRect(Math.round(47 + n * 54.4), 0, 1, 75);
  for (const y of [5, 31, 43, 68]) c.fillRect(0, y, 503, 1);
  for (const mid of [18, 56]) {
    const r = makeRandom(11);
    c.fillStyle = '#2c9767';
    c.fillRect(0, mid, 503, 1);
    for (const [a, b] of bursts) {
      const amp = 5 + r() * 3;
      for (let x = a; x < b; x++) {
        const h = amp * (.65 + r() * .4) * (1 - .4 * (x - a) / (b - a));
        c.fillStyle = '#2c9767';
        if (r() > .7) c.fillRect(Math.round(x), Math.round(mid - h - 2), 1, Math.round(h * 2 + 5));
        c.fillStyle = GREEN;
        c.fillRect(Math.round(x), Math.round(mid - h), 1, Math.round(h * 2));
      }
    }
  }
  c.fillStyle = '#999';
  c.fillRect(0, 37, 503, 1);
}

const stops = [[0, 10, 3, 25], [.2, 45, 8, 75], [.42, 112, 12, 98], [.62, 205, 12, 55], [.78, 250, 45, 12], [.9, 255, 165, 40], [1, 255, 240, 120]];
function heat(v) {
  v = Math.max(0, Math.min(1, v));
  let i = 1;
  while (stops[i][0] < v) i++;
  const a = stops[i - 1], b = stops[i], t = (v - a[0]) / (b[0] - a[0]);
  return [1, 2, 3].map(k => a[k] + (b[k] - a[k]) * t);
}

function drawSpectrum(id, seed) {
  const c = ctxOf(id), r = makeRandom(seed), w = 503, h = 146, top = 12;
  const img = c.createImageData(w, h), cols = [];
  let voice = .5;
  for (let x = 0; x < w; x++) {
    voice = Math.max(.2, Math.min(1, voice + (r() - .5) * .7));
    cols.push({
      voice,
      line: r() > .84 ? .25 + r() * .35 : r() * .16,
      start: r() * .5,
      onset: .2 + r() * .3,
      base: .8 + r() * .12,
      edge: r() * 6,
      grain: .5
    });
  }
  for (let y = 0; y < h; y++) {
    for (let x = 0; x < w; x++) {
      const k = (y * w + x) * 4;
      let rgb = [0, 0, 0];
      if (y >= top) {
        const d = (y - top) / (h - top), q = cols[x];
        q.grain = q.grain * .7 + r() * .3;
        let v = .12 + r() * .16 + (d > q.start ? q.line * (.6 + q.grain * .7) : q.line * .2);
        if (y < top + 3 + q.edge) v = .3 + r() * .12;
        const rise = Math.max(0, Math.min(1, (d - q.onset) / .3));
        v += rise * q.voice * q.voice * (.1 + q.grain * .45);
        v += Math.exp(-Math.pow((d - .62) / .12, 2)) * q.voice * .16;
        if (d > q.base) v += (d - q.base) * 2.6 * (.3 + q.voice);
        if (y > h - 3) v = .7 + r() * .1;
        rgb = heat(v);
      }
      img.data.set([rgb[0], rgb[1], rgb[2], 255], k);
    }
  }
  c.putImageData(img, 0, 0);
}

function drawTicks(id, count, step, start, major, size, vertical) {
  const c = ctxOf(id);
  c.fillStyle = '#a0a0a0';
  for (let n = 0; n < count; n++) {
    const p = Math.round(start + n * step), len = n % major === 0 ? size : Math.ceil(size / 2);
    if (vertical) c.fillRect(0, p, len, 1);
    else if (id === 'ticks') c.fillRect(p, 7 - len, 1, len);
    else c.fillRect(p, 0, 1, len);
  }
}

function drawRings() {
  const svg = document.getElementById('rings');
  for (let n = 24; n > 0; n--) {
    const ry = 44.7 * Math.pow(n, .573), e = document.createElementNS('http://www.w3.org/2000/svg', 'ellipse');
    const attrs = { cx: 139, cy: 186, rx: ry * .74, ry, fill: 'none', stroke: '#053a06', 'stroke-width': 1.2 };
    for (const name in attrs) e.setAttribute(name, attrs[name]);
    svg.prepend(e);
  }
}

drawOverview();
drawWave();
drawSpectrum('spec1', 21);
drawSpectrum('spec2', 77);
drawTicks('ticks', 37, 13.6, 6, 4, 6, false);
drawTicks('dbTicks', 61, 11.5, 0, 3, 5, false);
drawTicks('axisX', 21, 13.85, 0, 2, 7, false);
drawTicks('axisY', 41, 9.325, 0, 2, 7, true);
ctxOf('axisX').fillRect(0, 0, 278, 1);
ctxOf('axisY').fillRect(0, 0, 1, 374);
drawRings();
```
